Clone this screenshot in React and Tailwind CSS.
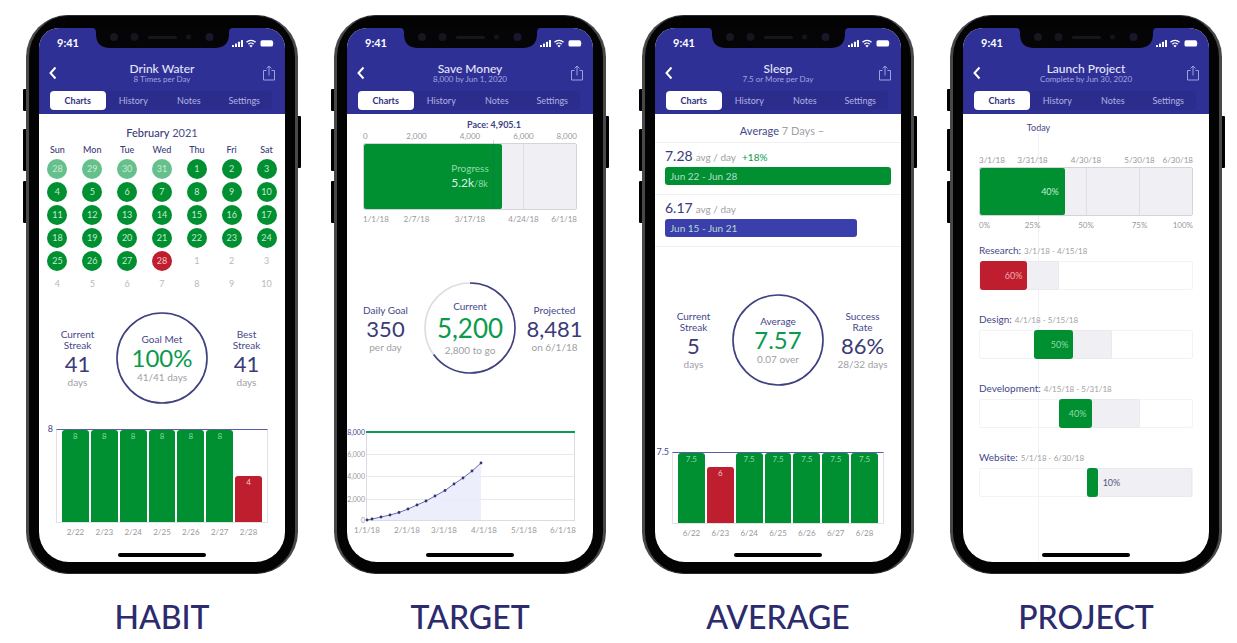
import React, { useState } from 'react';
import clsx from 'clsx';

const tabs = ['Charts', 'History', 'Notes', 'Settings'];

const weekdays = ['Sun', 'Mon', 'Tue', 'Wed', 'Thu', 'Fri', 'Sat'];

// status: prev = met last month, met, missed, next = not reached yet
const weeks = [
  [28, 29, 30, 31, 1, 2, 3].map((day, i) => ({ day, status: i < 4 ? 'prev' : 'met' })),
  [4, 5, 6, 7, 8, 9, 10].map((day) => ({ day, status: 'met' })),
  [11, 12, 13, 14, 15, 16, 17].map((day) => ({ day, status: 'met' })),
  [18, 19, 20, 21, 22, 23, 24].map((day) => ({ day, status: 'met' })),
  [25, 26, 27, 28, 1, 2, 3].map((day, i) => ({
    day,
    status: i < 3 ? 'met' : i === 3 ? 'missed' : 'next'
  })),
  [4, 5, 6, 7, 8, 9, 10].map((day) => ({ day, status: 'next' }))
];

const dayStyles = {
  prev: 'bg-[#66c08c] text-[#c9ecd6]',
  met: 'bg-[#008f31] text-[#c4ecd0]',
  missed: 'bg-[#be1e2d] text-[#f3c3c8]',
  next: 'text-[#b9b9bc]'
};

const waterBars = [
  { label: '2/22', value: 8 },
  { label: '2/23', value: 8 },
  { label: '2/24', value: 8 },
  { label: '2/25', value: 8 },
  { label: '2/26', value: 8 },
  { label: '2/27', value: 8 },
  { label: '2/28', value: 4 }
];

const sleepBars = [
  { label: '6/22', value: 7.5 },
  { label: '6/23', value: 6 },
  { label: '6/24', value: 7.5 },
  { label: '6/25', value: 7.5 },
  { label: '6/26', value: 7.5 },
  { label: '6/27', value: 7.5 },
  { label: '6/28', value: 7.5 }
];

const averages = [
  { value: '7.28', change: '+18%', range: 'Jun 22 - Jun 28', width: 100, color: 'bg-[#008f31]' },
  { value: '6.17', range: 'Jun 15 - Jun 21', width: 85, color: 'bg-[#3a3fab]' }
];

// start, end and done are percentages of the project's time span
const tasks = [
  { name: 'Research', dates: '3/1/18 - 4/15/18', start: 0, end: 37.4, done: 22.4, label: '60%', late: true },
  { name: 'Design', dates: '4/1/18 - 5/15/18', start: 25.7, end: 62.3, done: 18.4, label: '50%' },
  { name: 'Development', dates: '4/15/18 - 5/31/18', start: 37.4, end: 75.6, done: 15.2, label: '40%' },
  { name: 'Website', dates: '5/1/18 - 6/30/18', start: 50.5, end: 100, done: 5, label: '10%', outside: true }
];

const savings = [
  [20, 96], [25, 95], [34, 93], [43, 91], [52, 88.5], [61, 85], [70, 81],
  [79, 77], [88, 72], [98, 66.5], [107, 60], [116, 54], [125, 47], [134, 39]
];

function StatusIcons() {
  return (
    <svg viewBox="0 0 44 10" className="h-[10px] w-[44px]" fill="white" aria-hidden="true">
      <rect x="1" y="7" width="2" height="2" rx="0.5" />
      <rect x="4" y="5.5" width="2" height="3.5" rx="0.5" />
      <rect x="7" y="3.8" width="2" height="5.2" rx="0.5" />
      <rect x="10" y="2" width="2" height="7" rx="0.5" />
      <g fill="none" stroke="white" strokeWidth="1.3">
        <path d="M15.5 4.2a6.4 6.4 0 0 1 9 0" />
        <path d="M17.4 6.2a3.7 3.7 0 0 1 5.2 0" />
      </g>
      <path d="M20 9.4 18.4 7.7a2.3 2.3 0 0 1 3.2 0z" />
      <rect x="29.5" y="2.3" width="12.5" height="6.2" rx="1.6" />
      <path d="M42.6 4.2v2.4c.7-.3.7-2.1 0-2.4z" opacity="0.6" />
    </svg>);

}

function Notch() {
  return (
    <div className="absolute inset-x-0 top-0 flex justify-center">
      <svg viewBox="0 0 141 21" className="h-[21px] w-[141px]" aria-hidden="true">
        <path d="M0 0h141c-3 0-4 1.500-4 5v1c0 9-5 14-14 14H18C9 20 4 15 4 6V5c0-3.500-1-5-4-5z" fill="#050507" />
        <circle cx="22" cy="9" r="4" fill="#17171d" />
        <circle cx="42.500" cy="9" r="4" fill="#15151f" />
        <rect x="56" y="8" width="29" height="3" rx="1.500" fill="#17171b" />
        <circle cx="96.500" cy="9" r="2.500" fill="#14141a" />
        <circle cx="117.500" cy="9" r="4" fill="#19172c" />
      </svg>
    </div>);

}

function PhoneHeader({ title, subtitle }) {
  const [active, setActive] = useState('Charts');
  return (
    <header className="relative h-[86px] bg-[#2f3096] px-[10px] text-white">
      <Notch />
      <div className="flex h-[30px] items-center justify-between pl-2">
        <span className="text-[11px] leading-[14px] font-bold">9:41</span>
        <StatusIcons />
      </div>
      <div className="flex h-[33px] items-center justify-between pb-[3px]">
        <button type="button" aria-label="Back" className="w-3">
          <svg viewBox="0 0 12 14" className="h-[14px] w-3" fill="none" stroke="white" strokeWidth="2">
            <path d="M6.500 1.500 1.500 7l5 5.500" />
          </svg>
        </button>
        <div className="text-center">
          <h2 className="text-[12px] leading-[13px] font-medium text-[#e6e6fa]">{title}</h2>
          <p className="text-[8px] leading-[9px] text-[#a3a4dc]">{subtitle}</p>
        </div>
        <button type="button" aria-label="Share" className="w-3">
          <svg viewBox="0 0 12 16" className="h-4 w-3" fill="none" stroke="#9fa0dc">
            <path d="M3.500 5.500h-3v9.500h11V5.500h-3" />
            <path d="M6 10.500V1M3.500 3.500 6 1l2.500 2.500" />
          </svg>
        </button>
      </div>
      <div role="tablist" className="mr-[3px] ml-[1px] flex h-[19px] rounded-[4px] bg-[#2c2c8c]">
        {tabs.map((tab) =>
        <button
          key={tab}
          type="button"
          role="tab"
          aria-selected={tab === active}
          onClick={() => setActive(tab)}
          className={clsx(
            'flex-1 rounded-[4px] text-[9px] leading-[12px]',
            tab === active ? 'bg-white font-bold text-[#2f3080]' : 'text-[#b0b1e2]'
          )}>

            {tab}
          </button>
        )}
      </div>
    </header>);

}

function Phone({ title, subtitle, caption, children }) {
  return (
    <section className="flex flex-col">
      <div className="relative flex-1">
        <span className="absolute top-[74px] -left-[3px] h-[22px] w-[6px] rounded-[1px] bg-black" />
        <span className="absolute top-[114px] -left-[3px] h-[42px] w-[6px] rounded-[1px] bg-black" />
        <span className="absolute top-[166px] -left-[3px] h-[42px] w-[6px] rounded-[1px] bg-black" />
        <span className="absolute top-[101px] -right-[3px] h-[52px] w-[6px] rounded-[1px] bg-black" />
        <div className="relative rounded-[42px] border-x-[3px] border-y border-x-[#48484b] border-y-[#2a2a2c] bg-[#030304] px-[10px] pt-3 pb-[11px]">
          <div className="relative flex min-h-[534px] flex-col overflow-hidden rounded-t-[20px] rounded-b-[30px] bg-white">
            <PhoneHeader title={title} subtitle={subtitle} />
            {children}
            <div className="mt-auto flex justify-center pb-[5px]">
              <div className="h-1 w-[88px] rounded-full bg-black" />
            </div>
          </div>
        </div>
      </div>
      <h1 className="mt-[23px] text-center text-[32px] leading-[40px] font-medium text-[#2b2b6e]">{caption}</h1>
    </section>);

}

function SideStat({ lines, value, note }) {
  return (
    <div className="flex flex-col items-center whitespace-nowrap">
      {lines.map((line) =>
      <span key={line} className="text-[10px] leading-[11px] text-[#45478a]">{line}</span>
      )}
      <span className="text-[22px] leading-[26px] text-[#3a3b78]">{value}</span>
      <span className="text-[10px] leading-[10px] text-[#a0a0a4]">{note}</span>
    </div>);

}

function Stats({ left, right, label, value, note, progress = 100, roomy = false }) {
  return (
    <div className="grid grid-cols-[1fr_92px_1fr] items-center">
      <SideStat {...left} />
      <div className="relative flex size-[92px] flex-col items-center justify-center whitespace-nowrap">
        <svg viewBox="0 0 92 92" className="absolute inset-0 -rotate-90" fill="none" strokeWidth="1.600" aria-hidden="true">
          <circle cx="46" cy="46" r="45" stroke="#dedee0" />
          <circle cx="46" cy="46" r="45" stroke="#3f4183" pathLength="100" strokeDasharray={`${progress} 100`} />
        </svg>
        <span className="text-[10px] leading-[12px] text-[#45478a]">{label}</span>
        <span className={clsx('text-[#0a9a4c]', roomy ? 'text-[26px] leading-[32px]' : 'text-[24px] leading-[26px]')}>
          {value}
        </span>
        <span className="text-[10px] leading-[12px] text-[#a0a0a4]">{note}</span>
      </div>
      <SideStat {...right} />
    </div>);

}

function BarChart({ bars, goal, plotClass }) {
  return (
    <div className="mr-[17px] flex">
      <span className="-mt-[6px] w-[17px] pr-[3px] text-right text-[9px] leading-[12px] text-[#45478a]">{goal}</span>
      <div className="flex-1">
        <div className={clsx('flex items-end gap-[2px] border-x border-t border-b border-x-[#e2e2e5] border-t-[#5a5ca5] border-b-[#e2e2e5] px-[5px]', plotClass)}>
          {bars.map((bar) =>
          <div
            key={bar.label}
            style={{ height: `${bar.value / goal * 100}%` }}
            className={clsx(
              'flex-1 rounded-t-[3px] pt-[2px] text-center text-[8px] leading-[8px]',
              bar.value < goal ? 'bg-[#be1e2d] text-[#f3c3c8]' : 'bg-[#008f31] text-[#86dba0]'
            )}>

              {bar.value}
            </div>
          )}
        </div>
        <div className="flex gap-[2px] px-[6px] pt-[3px] text-[8px] leading-[12px] text-[#98989d]">
          {bars.map((bar) =>
          <span key={bar.label} className="flex-1 text-center">{bar.label}</span>
          )}
        </div>
      </div>
    </div>);

}

// first and last labels sit at the ends, the others are centred on the quarter lines
function Ticks({ labels }) {
  return (
    <div className="grid grid-cols-[1fr_2fr_2fr_2fr_1fr] text-[8px] leading-[10px] whitespace-nowrap text-[#98989d]">
      {labels.map((label, index) =>
      <span
        key={label}
        className={clsx('flex w-0 min-w-full', index === 0 ? 'justify-start' : index === 4 ? 'justify-end' : 'justify-center')}>

          {label}
        </span>
      )}
    </div>);

}

function Calendar() {
  return (
    <div className="px-[1px] pt-3">
      <h3 className="text-center text-[11px] leading-[14px] text-[#4b4d86]">
        <span className="font-medium text-[#3a3b78]">February</span> 2021
      </h3>
      <table className="mt-[3px] w-full table-fixed text-center">
        <thead>
          <tr className="text-[9px] leading-[14px] text-[#3a3b78]">
            {weekdays.map((day) =>
            <th key={day} className="p-0 font-medium">{day}</th>
            )}
          </tr>
        </thead>
        <tbody>
          {weeks.map((week, row) =>
          <tr key={row}>
              {week.map(({ day, status }) =>
            <td key={day} className="h-[23px] p-0">
                  <span className={clsx('mx-auto flex size-5 items-center justify-center rounded-full text-[9px] leading-none', dayStyles[status])}>
                    {day}
                  </span>
                </td>
            )}
            </tr>
          )}
        </tbody>
      </table>
    </div>);

}

function PaceBar() {
  return (
    <div className="px-4 pt-[5px]">
      <p className="pl-[48px] text-center text-[9px] leading-[12px] font-bold text-[#3f4183]">Pace: 4,905.1</p>
      <Ticks labels={['0', '2,000', '4,000', '6,000', '8,000']} />
      <div className="relative mt-[2px] mb-1 flex h-[67px] rounded-[2px] border border-[#d3d3d8] bg-[#efeff4]">
        <div className="flex w-[65%] flex-col items-end justify-center rounded-[2px] bg-[#008f31] pr-[13px] text-[#8fdca6]">
          <div>
            <p className="text-[10px] leading-[13px]">Progress</p>
            <p className="text-[9px] leading-[15px]"><span className="text-[12px] text-[#dcf5e3]">5.2k</span>/8k</p>
          </div>
        </div>
        <span className="absolute inset-y-0 left-3/4 w-px bg-[#dedee4]" />
        <span className="absolute -top-1 bottom-0 left-[61%] w-px bg-[#3f4183]/20" />
      </div>
      <Ticks labels={['1/1/18', '2/7/18', '3/17/18', '4/24/18', '6/1/18']} />
    </div>);

}

function SavingsChart() {
  const line = savings.map((point) => point.join(',')).join(' ');
  return (
    <svg viewBox="0 0 246 112" className="w-full" fontSize="8" fill="#98989d" role="img" aria-label="Savings over time">
      <g stroke="#e9e9ec">
        <path d="M20 30.500H227M20 52.500H227M20 75.500H227" />
        <path d="M19.500 8V97M227.500 8V97M19 96.500H228" stroke="#dcdce0" />
      </g>
      <polygon points={`${line} 134,96 20,96`} fill="#e9ebfa" fillOpacity="0.850" />
      <polyline points={line} fill="none" stroke="#6a6cb4" />
      {savings.map(([x, y]) =>
      <circle key={x} cx={x} cy={y} r="1.400" fill="#34356e" />
      )}
      <path d="M19 8H228" stroke="#109858" strokeWidth="2" />
      <g textAnchor="end" fontSize="7">
        <text x="18" y="11" fill="#45478a">8,000</text>
        <text x="18" y="33">6,000</text>
        <text x="18" y="55">4,000</text>
        <text x="18" y="78">2,000</text>
        <text x="18" y="99">0</text>
      </g>
      <g textAnchor="middle">
        <text x="20" y="109">1/1/18</text>
        <text x="60" y="109">2/1/18</text>
        <text x="97" y="109">3/1/18</text>
        <text x="137" y="109">4/1/18</text>
        <text x="177" y="109">5/1/18</text>
        <text x="216" y="109">6/1/18</text>
      </g>
    </svg>);

}

function AverageList() {
  return (
    <div>
      <div className="border-b border-[#f0f0f3] pt-[10px] pb-1 pl-2 text-center text-[11px] leading-[14px] text-[#a0a0a4]">
        <span className="text-[#45478a]">Average</span> 7 Days –
      </div>
      {averages.map((item) =>
      <div key={item.value} className="border-b border-[#f0f0f3] px-[10px] pt-[5px] pb-[9px]">
          <p className="flex items-baseline gap-[3px] text-[10px] leading-4 text-[#a0a0a4]">
            <span className="text-[14px] text-[#3a3b78]">{item.value}</span>
            avg / day
            {item.change && <span className="pl-[3px] text-[#0a9a4c]">{item.change}</span>}
          </p>
          <div
          style={{ width: `${item.width}%` }}
          className={clsx('mt-[2px] flex h-[18px] items-center rounded-[3px] pl-[5px] text-[10px] leading-[12px] text-[#b5dccb]', item.color)}>

            {item.range}
          </div>
        </div>
      )}
    </div>);

}

function ProjectTimeline() {
  return (
    <div className="px-4 pt-[41px]">
      <div className="absolute top-[94px] bottom-0 left-0 flex w-[151px] flex-col items-center">
        <span className="text-[9px] leading-[12px] text-[#45478a]">Today</span>
        <span className="w-px flex-1 bg-[#f1f1f4]" />
      </div>
      <div className="relative">
        <Ticks labels={['3/1/18', '3/31/18', '4/30/18', '5/30/18', '6/30/18']} />
        <div className="relative mt-[2px] mb-1 flex h-[49px] rounded-[2px] border border-[#d3d3d8] bg-[#efeff4]">
          <div className="flex w-[40%] items-center justify-end rounded-[2px] bg-[#008f31] pr-[6px] text-[9px] leading-[12px] text-[#c4ecd0]">40%</div>
          <span className="absolute inset-y-0 left-1/2 w-px bg-[#dedee4]" />
          <span className="absolute inset-y-0 left-3/4 w-px bg-[#dedee4]" />
        </div>
        <Ticks labels={['0%', '25%', '50%', '75%', '100%']} />
      </div>
      <ul className="mt-[14px] flex flex-col gap-[23px]">
        {tasks.map((task) =>
        <li key={task.name}>
            <p className="relative flex items-baseline gap-[3px] text-[8px] leading-[12px] text-[#a0a0a4]">
              <span className="text-[10px] text-[#45478a]">{task.name}:</span>
              {task.dates}
            </p>
            <div className="relative mt-1 h-[29px] rounded-[2px] border border-[#f3f3f5]">
              <div
              style={{ left: `${task.start}%`, width: `${task.end - task.start}%` }}
              className="absolute -inset-y-px rounded-[2px] border border-[#e9e9ee] bg-[#efeff4]" />

              <div
              style={{ left: `${task.start}%`, width: `${task.done}%` }}
              className={clsx(
                'absolute -inset-y-px flex items-center rounded-[3px] text-[9px] leading-[12px]',
                task.late ? 'bg-[#be1e2d] text-[#f0a9b0]' : 'bg-[#008f31]',
                task.outside ? 'text-[#55577f]' : 'justify-end pr-[5px]',
                !task.late && !task.outside && 'text-[#8fdca6]'
              )}>

                <span className={clsx(task.outside && 'absolute left-full pl-[5px]')}>{task.label}</span>
              </div>
            </div>
          </li>
        )}
      </ul>
    </div>);

}

export default function App() {
  return (
    <main className="grid grid-cols-4 gap-9 bg-white pt-[15px] pr-[15px] pl-[26px] font-['Lato',sans-serif]">
      <Phone title="Drink Water" subtitle="8 Times per Day" caption="HABIT">
        <Calendar />
        <div className="mt-[17px] mb-[25px]">
          <Stats
            left={{ lines: ['Current', 'Streak'], value: '41', note: 'days' }}
            right={{ lines: ['Best', 'Streak'], value: '41', note: 'days' }}
            label="Goal Met"
            value="100%"
            note="41/41 days" />

        </div>
        <BarChart bars={waterBars} goal={8} plotClass="h-[94px]" />
      </Phone>

      <Phone title="Save Money" subtitle="8,000 by Jun 1, 2020" caption="TARGET">
        <PaceBar />
        <div className="mt-[58px] mb-[50px]">
          <Stats
            left={{ lines: ['Daily Goal'], value: '350', note: 'per day' }}
            right={{ lines: ['Projected'], value: '8,481', note: 'on 6/1/18' }}
            label="Current"
            value="5,200"
            note="2,800 to go"
            progress={65}
            roomy />

        </div>
        <SavingsChart />
      </Phone>

      <Phone title="Sleep" subtitle="7.5 or More per Day" caption="AVERAGE">
        <AverageList />
        <div className="mt-[47px] mb-[66px]">
          <Stats
            left={{ lines: ['Current', 'Streak'], value: '5', note: 'days' }}
            right={{ lines: ['Success', 'Rate'], value: '86%', note: '28/32 days' }}
            label="Average"
            value="7.57"
            note="0.07 over" />

        </div>
        <BarChart bars={sleepBars} goal={7.5} plotClass="h-[72px]" />
      </Phone>

      <Phone title="Launch Project" subtitle="Complete by Jun 30, 2020" caption="PROJECT">
        <ProjectTimeline />
      </Phone>
    </main>);

}
